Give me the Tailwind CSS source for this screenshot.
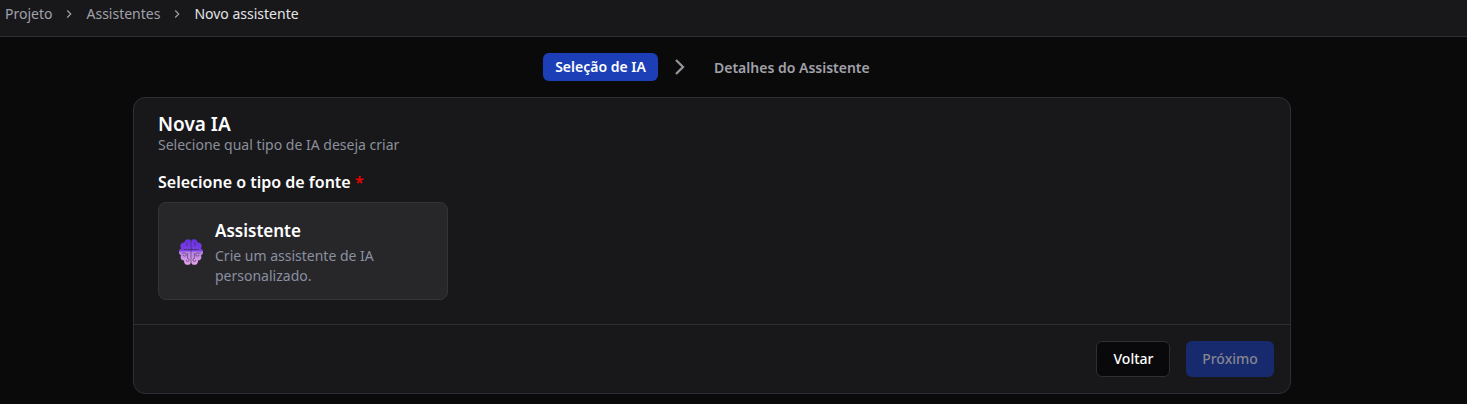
<!DOCTYPE html>
<html lang="en">
  <head>
    <meta charset="utf-8" />
    <meta name="viewport" content="width=device-width, initial-scale=1" />
    <title>Novo assistente</title>
    <script src="https://cdn.jsdelivr.net/npm/@tailwindcss/browser@4"></script>
  </head>
  <body class="bg-[#0a0a0b] text-white font-['Noto_Sans',sans-serif] h-[404px] overflow-hidden">
    <nav class="h-[37px] bg-[#18181b] border-b border-[#2e2e35] flex items-center pl-[5px] pb-[9px] text-sm text-[#a1a1aa]">
      <span>Projeto</span>
      <svg class="w-[14px] h-[14px] mx-[10px]" viewBox="0 0 24 24" fill="none" stroke="currentColor" stroke-width="2"><path d="m9 6 6 6-6 6" /></svg>
      <span>Assistentes</span>
      <svg class="w-[14px] h-[14px] mx-[10px]" viewBox="0 0 24 24" fill="none" stroke="currentColor" stroke-width="2"><path d="m9 6 6 6-6 6" /></svg>
      <span class="text-[#e4e4e7]">Novo assistente</span>
    </nav>
    <div class="flex items-center h-7 mt-4 pl-[543px]">
      <div class="h-7 w-[115px] rounded-md bg-[#1c3fb8] flex items-center justify-center text-sm font-semibold">Seleção de IA</div>
      <svg class="w-6 h-6 ml-[9px] text-[#94949a]" viewBox="0 0 24 24" fill="none" stroke="currentColor" stroke-width="2.3"><path d="m9 5 7 7-7 7" /></svg>
      <div class="ml-[23px] text-sm font-semibold text-[#a1a1aa] pt-px">Detalhes do Assistente</div>
    </div>
    <main class="ml-[133px] mt-4 w-[1158px] h-[297px] rounded-xl border border-[#2e2e35] bg-[#18181b] flex flex-col">
      <div class="flex-1 pl-6 pt-[13px]">
        <h1 class="text-[19px] leading-[26px] font-semibold">Nova IA</h1>
        <p class="text-sm leading-[16px] text-[#8b8f9a]">Selecione qual tipo de IA deseja criar</p>
        <p class="mt-[17px] text-base leading-6 font-semibold">Selecione o tipo de fonte <span class="text-[#f00000]">*</span></p>
        <div class="mt-[8px] w-[290px] h-[98px] rounded-lg border border-[#33333a] bg-[#27272a] flex items-center pl-5">
          <svg class="w-6 h-[26px] shrink-0 mt-[2px]" viewBox="0 0 24 26">
            <defs>
              <linearGradient id="brainFill" gradientUnits="userSpaceOnUse" x1="0" y1="0" x2="0" y2="26">
                <stop offset="0" stop-color="#6a2fe6" />
                <stop offset="0.44" stop-color="#7b40e2" />
                <stop offset="0.52" stop-color="#bb84ea" />
                <stop offset="1" stop-color="#e6a2ea" />
              </linearGradient>
            </defs>
            <g fill="url(#brainFill)">
              <circle cx="9" cy="3.4" r="3.2" />
              <circle cx="15" cy="3.4" r="3.2" />
              <circle cx="5" cy="7" r="3.6" />
              <circle cx="19" cy="7" r="3.6" />
              <circle cx="3.4" cy="13" r="3.4" />
              <circle cx="20.6" cy="13" r="3.4" />
              <circle cx="5" cy="18" r="3.4" />
              <circle cx="19" cy="18" r="3.4" />
              <circle cx="8.6" cy="22.4" r="3.4" />
              <circle cx="15.4" cy="22.4" r="3.4" />
              <rect x="5" y="3" width="14" height="20" />
            </g>
            <path fill="none" stroke="#27272a" stroke-width="1" opacity="0.5" d="M12 1v24M8 3v4.5M16 3v4.5M4.5 10.5H12M19.5 10.5H12M2.5 14h3.2a1.6 1.6 0 1 1-1.6 1.6M21.5 14h-3.2a1.6 1.6 0 1 0 1.6 1.6M8.6 14v5.5a1.5 1.5 0 1 1-1.5 1.5M15.4 14v5.5a1.5 1.5 0 1 0 1.5 1.5" />
          </svg>
          <div class="ml-3">
            <h2 class="text-[17px] leading-6 font-semibold mt-[2px]">Assistente</h2>
            <p class="text-sm leading-5 text-[#8a90a0] w-[200px] mt-[3px]">Crie um assistente de IA personalizado.</p>
          </div>
        </div>
      </div>
      <div class="h-[69px] border-t border-[#2e2e35] flex items-center justify-end gap-4 pr-4">
        <button class="w-[74px] h-9 pl-px rounded-md border border-[#2e2e35] bg-[#09090b] text-sm font-medium">Voltar</button>
        <button class="w-[88px] h-9 rounded-md bg-[#172a6e] text-sm font-medium text-[#85858f]">Próximo</button>
      </div>
    </main>
  </body>
</html>
